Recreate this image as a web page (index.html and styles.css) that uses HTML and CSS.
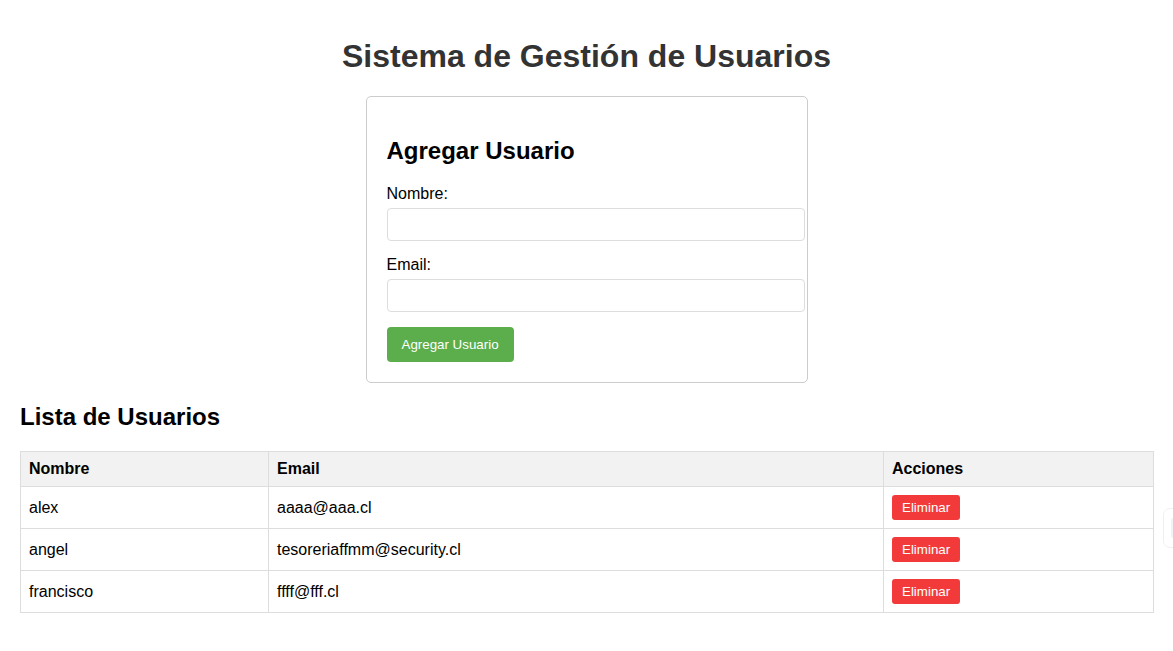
FILE: index.html
```html
<!DOCTYPE html>
<html lang="es">
<head>
<meta charset="utf-8">
<title>Sistema de Gestión de Usuarios</title>
<link rel="stylesheet" href="styles.css">
</head>
<body>
  <h1 class="title">Sistema de Gestión de Usuarios</h1>
  <div class="card">
    <h2 class="card-title">Agregar Usuario</h2>
    <label class="label" for="nombre">Nombre:</label>
    <input class="input" id="nombre" type="text">
    <label class="label" for="email">Email:</label>
    <input class="input" id="email" type="email">
    <button class="btn-add">Agregar Usuario</button>
  </div>
  <h2 class="section-title">Lista de Usuarios</h2>
  <table class="users">
    <colgroup>
      <col class="c-name">
      <col class="c-email">
      <col class="c-act">
    </colgroup>
    <thead>
      <tr><th>Nombre</th><th>Email</th><th>Acciones</th></tr>
    </thead>
    <tbody>
      <tr><td>alex</td><td>aaaa@aaa.cl</td><td><button class="btn-del">Eliminar</button></td></tr>
      <tr><td>angel</td><td>tesoreriaffmm@security.cl</td><td><button class="btn-del">Eliminar</button></td></tr>
      <tr><td>francisco</td><td>ffff@fff.cl</td><td><button class="btn-del">Eliminar</button></td></tr>
    </tbody>
  </table>
  <div class="edge-widget"><span class="edge-bar"></span></div>
</body>
</html>
```

FILE: styles.css
```css
html, body {
  background: #fff;
}
body {
  margin: 0;
  padding: 17px 20px 20px;
  font-family: "Liberation Sans", Arial, sans-serif;
  color: #000;
}
.title {
  text-align: center;
  color: #333;
  font-size: 32px;
  font-weight: bold;
  margin: 21px 0 21px;
}
.card {
  width: 400px;
  margin: 0 auto;
  padding: 20px;
  border: 1px solid #ccc;
  border-radius: 5px;
}
.card-title {
  font-size: 24px;
  margin: 20px 0;
}
.label {
  display: block;
  font-size: 16px;
  margin-bottom: 5px;
}
.input {
  display: block;
  width: 100%;
  padding: 8px;
  border: 1px solid #ddd;
  border-radius: 4px;
  font-family: "Liberation Sans", Arial, sans-serif;
  font-size: 13.333px;
  line-height: 15px;
  height: 33px;
  box-sizing: border-box;
  width: 418px;
  margin: 0 0 15px;
}
.btn-add {
  display: block;
  background: #5cae4c;
  color: #fff;
  border: none;
  border-radius: 4px;
  padding: 10px 15px;
  font-family: "Liberation Sans", Arial, sans-serif;
  font-size: 13.333px;
  line-height: 15px;
  cursor: pointer;
}
.section-title {
  font-size: 24px;
  margin: 20px 0;
}
.users {
  width: 100%;
  border-collapse: collapse;
  table-layout: fixed;
}
.c-name { width: 248px; }
.c-email { width: 615px; }
.c-act { width: 270px; }
.users th, .users td {
  border: 1px solid #ddd;
  padding: 8px;
  text-align: left;
  font-size: 16px;
  line-height: 18px;
}
.users th {
  background: #f2f2f2;
  font-weight: bold;
}
.users td {
  height: 25px;
  vertical-align: middle;
}
.btn-del {
  display: block;
  background: #f23a3b;
  color: #fff;
  border: none;
  border-radius: 3px;
  padding: 5px 10px;
  font-family: "Liberation Sans", Arial, sans-serif;
  font-size: 13.333px;
  line-height: 15px;
  cursor: pointer;
}
.edge-widget {
  position: fixed;
  right: -30px;
  top: 508px;
  width: 40px;
  height: 40px;
  border: 1px solid #f0f0f3;
  border-radius: 7px;
  background: #fff;
  box-sizing: border-box;
}
.edge-bar {
  position: absolute;
  left: 7px;
  top: 9px;
  width: 4px;
  height: 20px;
  border-radius: 2px;
  background: #f1f1f8;
}
```
